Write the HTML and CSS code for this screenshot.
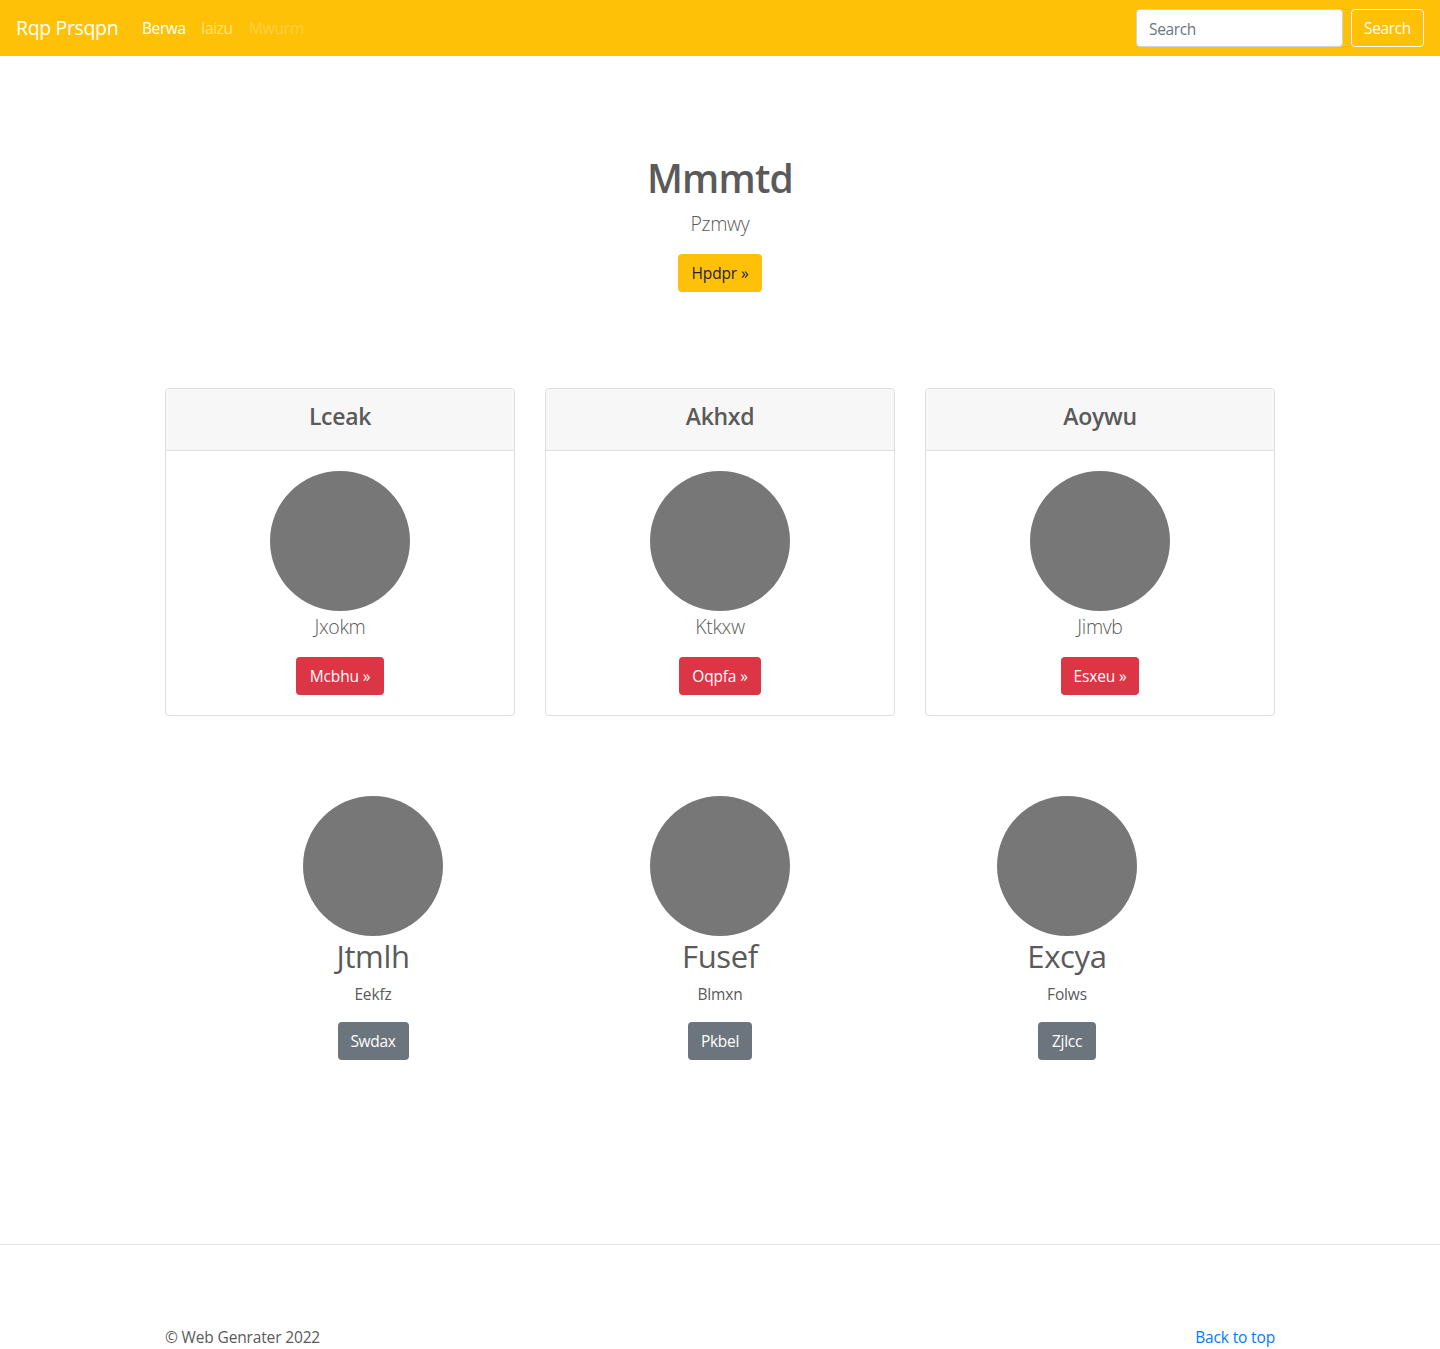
FILE: index.html
```
<!DOCTYPE html>
<html lang="en">
<head>
<meta charset="utf-8">
<title>Rqp Prsqpn</title>
<link rel="stylesheet" href="styles.css">
</head>
<body>
<header class="navbar">
  <a class="brand" href="#"><span>Rqp Prsqpn</span></a>
  <nav class="nav">
    <a class="nav-link active w-berwa" href="#">Berwa</a>
    <a class="nav-link w-iaizu" href="#">Iaizu</a>
    <a class="nav-link disabled">Mwurm</a>
  </nav>
  <form class="search">
    <input class="search-input" type="text" placeholder="Search" aria-label="Search">
    <button class="btn btn-outline" type="button">Search</button>
  </form>
</header>
<main>
  <section class="hero">
    <h1>Mmmtd</h1>
    <p class="lead">Pzmwy</p>
    <a class="btn btn-warning" href="#">Hpdpr »</a>
  </section>
  <section class="cards">
    <article class="card">
      <div class="card-header"><h4>Lceak</h4></div>
      <div class="card-body">
        <div class="circle"></div>
        <p class="lead">Jxokm</p>
        <a class="btn btn-danger w-mcbhu" href="#">Mcbhu »</a>
      </div>
    </article>
    <article class="card">
      <div class="card-header"><h4>Akhxd</h4></div>
      <div class="card-body">
        <div class="circle"></div>
        <p class="lead">Ktkxw</p>
        <a class="btn btn-danger w-oqpfa" href="#">Oqpfa »</a>
      </div>
    </article>
    <article class="card">
      <div class="card-header"><h4>Aoywu</h4></div>
      <div class="card-body">
        <div class="circle"></div>
        <p class="lead">Jimvb</p>
        <a class="btn btn-danger w-esxeu" href="#">Esxeu »</a>
      </div>
    </article>
  </section>
  <section class="features">
    <div class="feature">
      <div class="circle"></div>
      <h2>Jtmlh</h2>
      <p>Eekfz</p>
      <a class="btn btn-secondary w-swdax" href="#">Swdax</a>
    </div>
    <div class="feature">
      <div class="circle"></div>
      <h2>Fusef</h2>
      <p>Blmxn</p>
      <a class="btn btn-secondary w-pkbel" href="#">Pkbel</a>
    </div>
    <div class="feature">
      <div class="circle"></div>
      <h2>Excya</h2>
      <p>Folws</p>
      <a class="btn btn-secondary w-zjlcc" href="#">Zjlcc</a>
    </div>
  </section>
</main>
<hr class="divider">
<footer class="footer">
  <span class="copyright">© Web Genrater 2022</span>
  <a class="top-link" href="#">Back to top</a>
</footer>
</body>
</html>
```
FILE: styles.css
```
* { box-sizing: border-box; }
body {
  margin: 0;
  background: #fff;
  color: #5a5a5a;
  font-family: "Segoe UI", "Open Sans", "Noto Sans", sans-serif;
  font-size: 15.5px;
  line-height: 22.4px;
  letter-spacing: -0.15px;
}
a { text-decoration: none; color: inherit; }
h1, h2, h4, p { margin: 0; }

.navbar {
  height: 56px;
  padding: 0 16px;
  display: flex;
  align-items: center;
  background: #ffc107;
  color: #fff;
}
.brand { width: 102px; margin-right: 24px; font-size: 19.5px; letter-spacing: -0.35px; white-space: nowrap; }
.nav { display: flex; gap: 16px; letter-spacing: -0.4px; }
.nav-link { color: rgba(255, 255, 255, .5); white-space: nowrap; }
.nav-link.active { color: #fff; }
.nav-link.disabled { color: rgba(255, 255, 255, .25); letter-spacing: -0.2px; }
.w-berwa { width: 43px; }
.w-iaizu { width: 32px; }
.search { display: flex; gap: 8px; margin-left: auto; letter-spacing: -0.35px; }
.search-input {
  width: 207px;
  height: 38px;
  padding: 7px 12px 5px;
  border: 1px solid #ced4da;
  border-radius: 4px;
  background: #fff;
  font: inherit;
  letter-spacing: inherit;
}
.search-input::placeholder { color: #6c757d; opacity: 1; }

.btn {
  display: inline-flex;
  align-items: center;
  justify-content: center;
  height: 38px;
  border: 1px solid transparent;
  border-radius: 4px;
  font: inherit;
  letter-spacing: inherit;
  color: #fff;
  white-space: nowrap;
}
.btn-outline { width: 73px; background: transparent; border-color: #f8f9fa; color: #f8f9fa; }
.btn-warning { width: 84px; background: #ffc107; color: #212529; }
.btn-danger { background: #dc3545; }
.btn-secondary { background: #6c757d; letter-spacing: -0.3px; }
.w-mcbhu { width: 88px; }
.w-oqpfa { width: 82px; }
.w-esxeu { width: 78px; }
.w-swdax { width: 71px; }
.w-pkbel { width: 64px; }
.w-zjlcc { width: 58px; }

.hero {
  display: flex;
  flex-direction: column;
  align-items: center;
  padding-top: 98px;
}
h1 { margin-bottom: 8px; font-size: 39px; line-height: 48px; font-weight: 600; letter-spacing: -0.8px; }
.lead { margin-bottom: 16px; font-size: 19.5px; line-height: 28px; font-weight: 300; letter-spacing: -0.35px; }

.cards {
  width: 1110px;
  margin: 96px auto 0;
  display: grid;
  grid-template-columns: repeat(3, 1fr);
  gap: 30px;
}
.card { height: 328px; border: 1px solid #dfdfdf; border-radius: 4px; overflow: hidden; }
.card-header {
  height: 62px;
  padding-top: 13px;
  background: #f7f7f7;
  border-bottom: 1px solid #dfdfdf;
  text-align: center;
}
h4 { font-size: 23px; line-height: 29px; font-weight: 600; letter-spacing: -0.3px; }
.card-body { display: flex; flex-direction: column; align-items: center; padding-top: 20px; }
.circle { width: 140px; height: 140px; border-radius: 50%; background: #777; }
.card .circle { margin-bottom: 2px; }

.features {
  width: 1041px;
  margin: 80px auto 0;
  display: grid;
  grid-template-columns: repeat(3, 1fr);
}
.feature { display: flex; flex-direction: column; align-items: center; }
h2 { margin: 1px 0 8px; font-size: 31px; line-height: 38px; font-weight: 400; letter-spacing: -0.35px; }
.feature p { height: 22px; margin-bottom: 17px; }

.divider { height: 1px; margin: 184px 0 0; border: 0; background: #e2e2e2; }
.footer {
  width: 1110px;
  margin: 0 auto;
  padding-top: 81px;
  display: flex;
  justify-content: space-between;
}
.top-link { color: #007bff; }
```
